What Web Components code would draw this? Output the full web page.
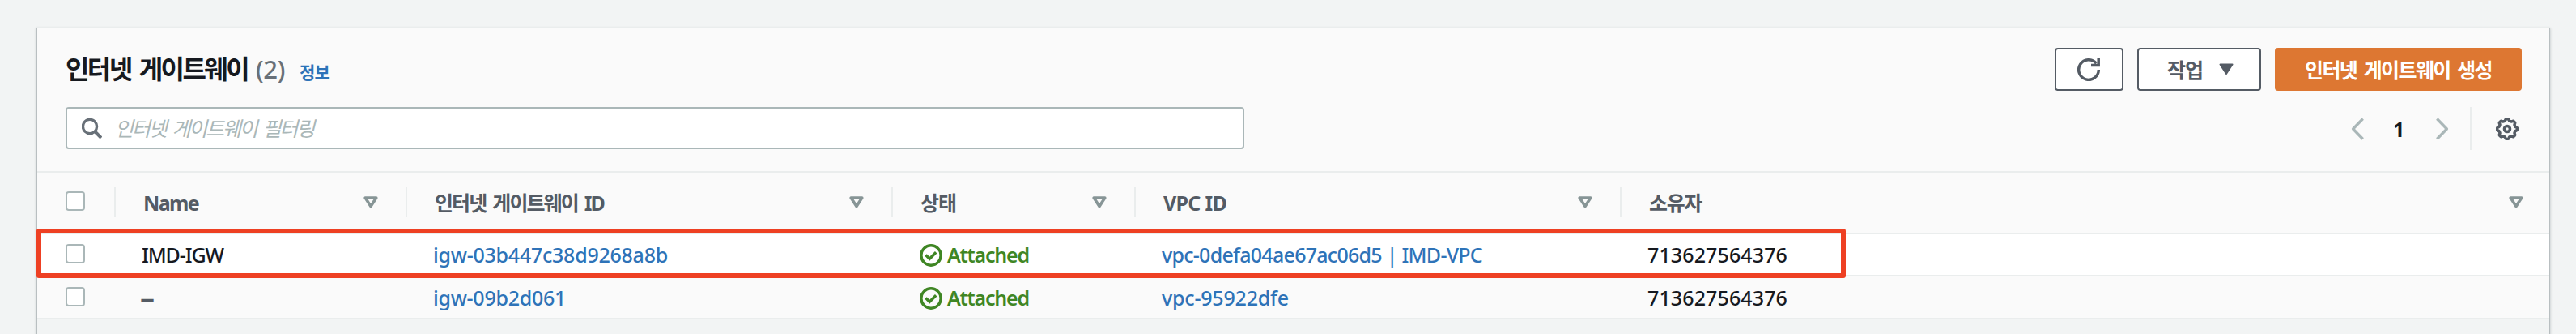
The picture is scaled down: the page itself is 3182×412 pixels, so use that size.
<!DOCTYPE html>
<html lang="ko">
<head>
<meta charset="utf-8">
<title>인터넷 게이트웨이</title>
<style>
html,body{margin:0;height:412px;overflow:hidden;background:#f2f4f4}
body{font-family:"Noto Sans","Noto Sans CJK KR",sans-serif;color:#16191f}
</style>
</head>
<body>
<gateway-page></gateway-page>
<script>
class Base extends HTMLElement{
  connectedCallback(){
    if(this.shadowRoot)return;
    this.attachShadow({mode:'open'}).innerHTML=this.render();
    this.ready&&this.ready();
  }
}
/* Text run tracked to an exact advance width */
customElements.define('ui-text',class extends Base{
  render(){return `<style>:host{display:block;white-space:pre;flex:none}span{display:inline-block;white-space:pre}</style><span><slot></slot></span>`}
  ready(){
    const w=+this.getAttribute('w'),s=this.shadowRoot.querySelector('span');
    if(/[가-힣]/.test(this.textContent))s.style.wordSpacing='.14em';
    if(w){
      const n=[...this.textContent].length;
      s.style.letterSpacing=((w-s.getBoundingClientRect().width)/n)+'px';
    }
  }
});
const icons={
  search:[25,25,'<circle cx="10" cy="10" r="8.6" fill="none" stroke="#687078" stroke-width="3.4"/><path d="M16 16l8 8" stroke="#687078" stroke-width="4" fill="none"/>'],
  sort:[18,15,'<path d="M2.2 2h13.6L9 12.4z" fill="none" stroke="#879596" stroke-width="3.6" stroke-linejoin="round"/>'],
  caret:[18,15,'<path d="M1.5 1.5h15L9 13z" fill="#545b64" stroke="#545b64" stroke-width="2" stroke-linejoin="round"/>'],
  refresh:[28,28,'<path d="M26.3 14A12.3 12.3 0 1 1 23.4 6.1M26.2 0v8.4H17" fill="none" stroke="#545b64" stroke-width="3.5"/>'],
  ok:[28,28,'<circle cx="14" cy="14" r="12.2" fill="none" stroke="#3f8624" stroke-width="3.5"/><path d="M7.5 13.6l4.7 4.6 8-8" fill="none" stroke="#3f8624" stroke-width="3.5"/>'],
  prev:[17,28,'<path d="M14.7 1.5L2.6 14l12.1 12.5" fill="none" stroke="#aab7b8" stroke-width="3.4" stroke-linejoin="round"/>'],
  next:[17,28,'<path d="M2.3 1.5L14.4 14 2.3 26.5" fill="none" stroke="#aab7b8" stroke-width="3.4" stroke-linejoin="round"/>']
};
const gear=()=>{
  let p=[];
  for(let i=0;i<96;i++){
    const a=i/96*Math.PI*2,r=11.3+1.15*Math.tanh(2.2*Math.cos(8*a));
    p.push((14+r*Math.sin(a)).toFixed(2)+','+(14-r*Math.cos(a)).toFixed(2));
  }
  return `<polygon points="${p.join(' ')}" fill="none" stroke="#545b64" stroke-width="3.5" stroke-linejoin="round"/><circle cx="14" cy="14" r="3.5" fill="none" stroke="#545b64" stroke-width="3.6"/>`;
};
icons.gear=[28,28,gear()];
customElements.define('ui-icon',class extends Base{
  render(){const [w,h,b]=icons[this.getAttribute('name')];
  return `<style>:host{display:block;flex:none}svg{display:block}</style><svg width="${w}" height="${h}" viewBox="0 0 ${w} ${h}">${b}</svg>`}
});
customElements.define('ui-check',class extends Base{
  render(){return `<style>:host{display:block;box-sizing:border-box;width:24px;height:24px;border:2px solid #aab7b8;border-radius:4px;background:#fff}</style>`}
});
customElements.define('ui-button',class extends Base{
  render(){return `<style>:host{display:flex;align-items:center;box-sizing:border-box;height:53px;border:2px solid #545b64;border-radius:4px;background:#fff;color:#545b64;font-weight:700;font-size:25px;line-height:32px}
  :host([primary]){background:#dd7732;border-color:#dd7732;color:#fff}</style><slot></slot>`}
});
customElements.define('panel-header',class extends Base{
  render(){return `<style>
  :host{display:block;box-sizing:border-box;height:176px;padding:24px 34px 0 35px;background:#fafafa}
  .r{display:flex}.t{height:53px;align-items:flex-start}.s{margin-top:20px;height:53px;align-items:flex-start}
  .grow{flex:1}
  h1{margin:0;display:flex;align-items:baseline;font-size:32px;line-height:44px;padding-top:4px}
  .n{font-weight:500;color:#687078;margin-left:10px;font-size:31px}
  .i{font-size:21px;color:#2e73b8;margin-left:18px}
  .b{display:flex;gap:17px}
  .f{display:flex;align-items:center;box-sizing:border-box;width:1456px;height:52px;border:2px solid #aab7b8;border-radius:4px;background:#fff;padding-left:18px;font-size:25px;line-height:32px;font-style:italic;color:#aab7b8}
  .f ui-text{margin-left:16px}
  .p{display:flex;align-items:center;height:53px;font-size:25px;line-height:32px;font-weight:700}
  .d{width:2px;height:53px;background:#eaeded;margin:0 30px 0 26px}
  </style>
  <div class="r t"><h1><ui-text w="225">인터넷 게이트웨이</ui-text><ui-text class="n" w="36">(2)</ui-text><ui-text class="i" w="37">정보</ui-text></h1><div class="grow"></div>
  <div class="b"><ui-button style="width:85px;padding-left:26px"><ui-icon name="refresh"></ui-icon></ui-button>
  <ui-button style="width:153px;padding-left:35px"><ui-text w="44">작업</ui-text><ui-icon name="caret" style="margin-left:20px"></ui-icon></ui-button>
  <ui-button primary style="width:305px;padding-left:35px"><ui-text w="231">인터넷 게이트웨이 생성</ui-text></ui-button></div></div>
  <div class="r s"><div class="f"><ui-icon name="search"></ui-icon><ui-text w="245">인터넷 게이트웨이 필터링</ui-text></div><div class="grow"></div>
  <div class="p"><ui-icon name="prev"></ui-icon><ui-text style="margin:0 38px 0 35px" w="14">1</ui-text><ui-icon name="next"></ui-icon><div class="d"></div><ui-icon name="gear" style="margin-right:4px"></ui-icon></div></div>`}
});
customElements.define('table-row',class extends Base{
  render(){return `<style>:host{display:grid;grid-template-columns:95px 360px 600px 300px 600px 1fr;align-items:center;box-sizing:border-box;background:#fafafa;border-bottom:2px solid #eaeded;font-size:25px;line-height:34px}
  ::slotted(ui-check){margin-left:35px;margin-bottom:2px}</style><slot></slot>`}
});
customElements.define('head-cell',class extends Base{
  render(){return `<style>:host{display:flex;align-items:center;justify-content:space-between;box-sizing:border-box;height:37px;border-left:2px solid #eaeded;padding:0 34px;color:#545b64;font-weight:700}</style><slot></slot><ui-icon name="sort"></ui-icon>`}
});
customElements.define('data-cell',class extends Base{
  render(){return `<style>:host{display:flex;align-items:center;padding-left:34px;font-weight:500}
  :host([link]){color:#2e73b8;font-weight:500}:host([ok]){color:#3f8624;font-weight:600;padding-left:35px;gap:6px}:host([dim]){color:#545b64;font-size:36px;font-weight:500;padding:0 0 0 32px}
  ::slotted(ui-icon){margin-top:2px}</style><slot></slot>`}
});
customElements.define('gateway-page',class extends Base{
  render(){return `<style>
  :host{display:block;position:relative;height:412px;overflow:hidden;padding:35px 32px 0 45px;box-sizing:border-box}
  .panel{height:500px;border-left:1px solid #b9bfc1;border-right:1px solid #b9bfc1;box-shadow:0 -2px 0 #eaeded,0 0 3px rgba(0,28,36,.25)}
  .mark{position:absolute;box-sizing:border-box;left:45px;top:282px;width:2235px;height:61px;border:6px solid #ee4023;border-radius:3px}
  </style>
  <div class="panel"><panel-header></panel-header>
  <table-row style="height:78px;border-top:2px solid #eaeded;padding-bottom:1px"><ui-check style="margin-bottom:3px"></ui-check>
   <head-cell><ui-text w="68">Name</ui-text></head-cell><head-cell><ui-text w="209">인터넷 게이트웨이 ID</ui-text></head-cell><head-cell><ui-text w="44">상태</ui-text></head-cell><head-cell><ui-text w="78">VPC ID</ui-text></head-cell><head-cell style="padding-right:32px"><ui-text w="65">소유자</ui-text></head-cell></table-row>
  <table-row style="height:52px;background:#fff"><ui-check></ui-check>
   <data-cell><ui-text w="101">IMD-IGW</ui-text></data-cell><data-cell link><ui-text w="290">igw-03b447c38d9268a8b</ui-text></data-cell><data-cell ok><ui-icon name="ok"></ui-icon><ui-text w="101">Attached</ui-text></data-cell><data-cell link><ui-text w="396">vpc-0defa04ae67ac06d5 | IMD-VPC</ui-text></data-cell><data-cell><ui-text w="173">713627564376</ui-text></data-cell></table-row>
  <table-row style="height:53px;padding-top:1px"><ui-check style="margin-bottom:3px"></ui-check>
   <data-cell dim><ui-text>–</ui-text></data-cell><data-cell link><ui-text w="164">igw-09b2d061</ui-text></data-cell><data-cell ok><ui-icon name="ok"></ui-icon><ui-text w="101">Attached</ui-text></data-cell><data-cell link><ui-text w="157">vpc-95922dfe</ui-text></data-cell><data-cell><ui-text w="173">713627564376</ui-text></data-cell></table-row>
  </div><div class="mark"></div>`}
});
</script>
</body>
</html>
